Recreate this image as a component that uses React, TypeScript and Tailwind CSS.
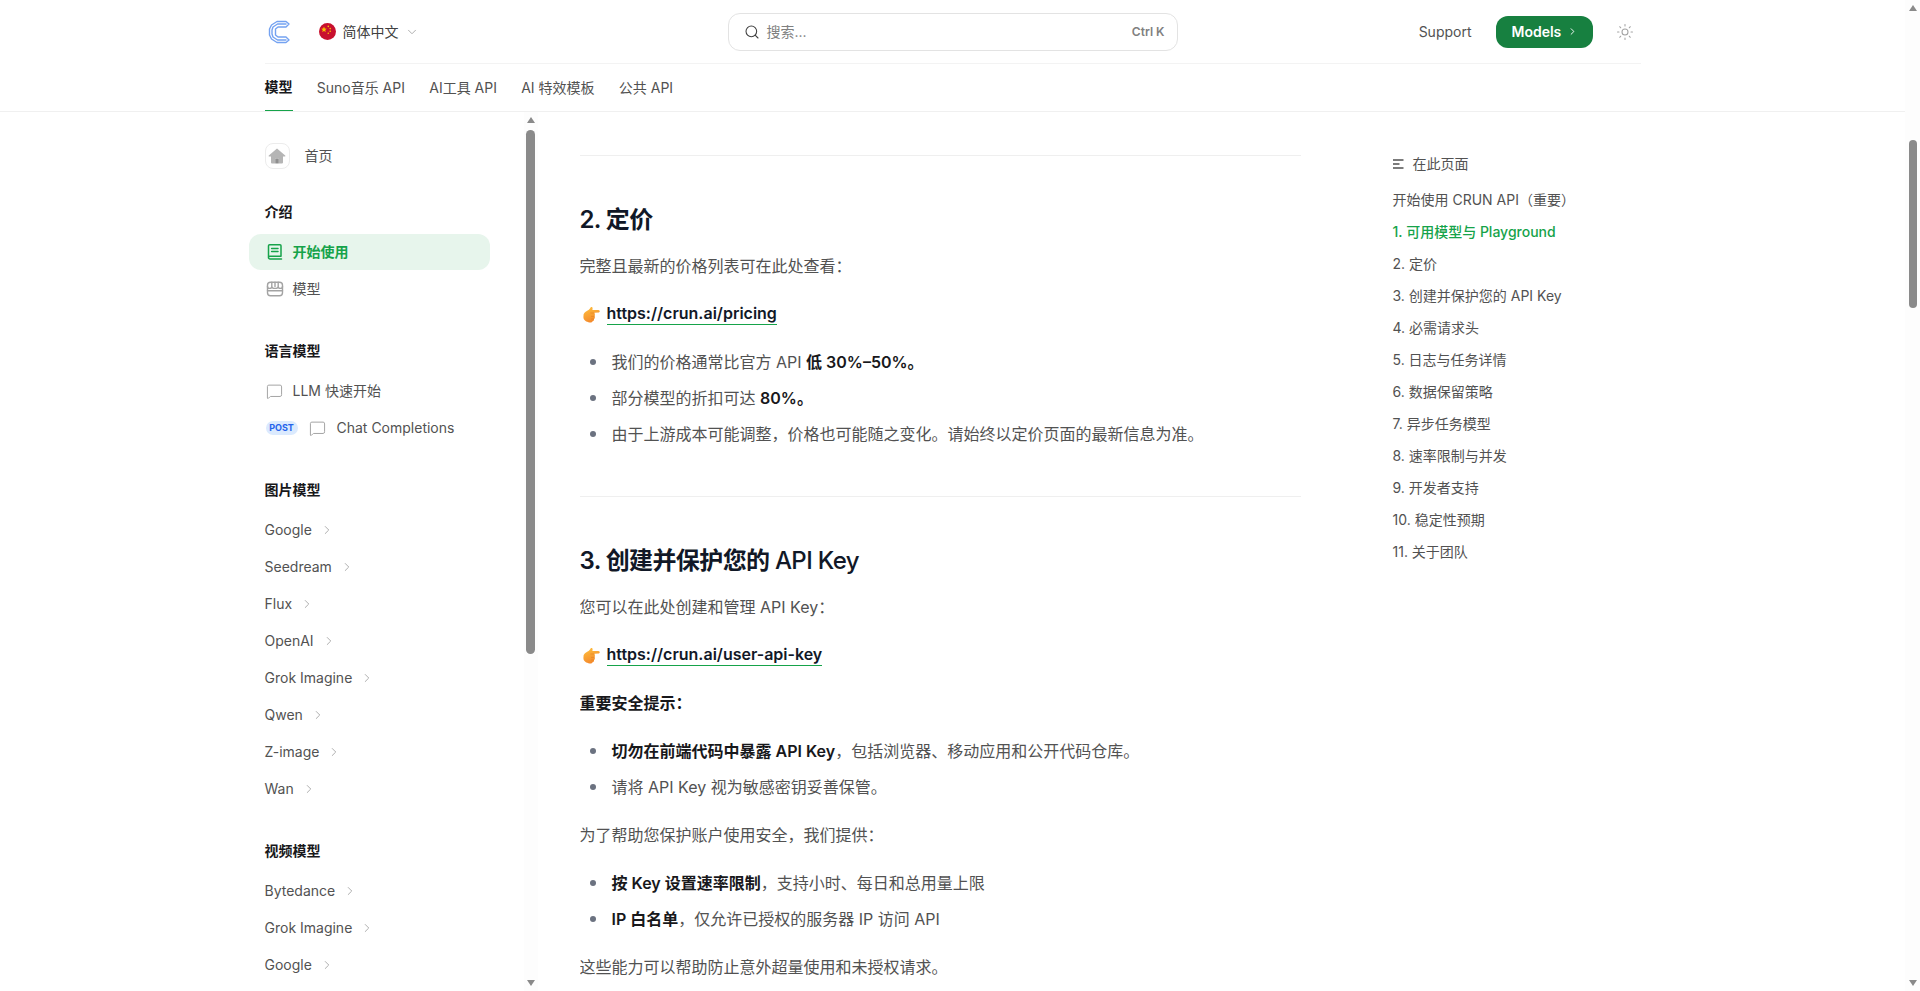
import { Search, ChevronDown, ChevronRight, Sun, MessageSquare } from "lucide-react";

const FONT = "font-['Inter','Noto_Sans_CJK_SC',sans-serif]";

function Logo() {
  return (
    <svg width="24" height="24" viewBox="0 0 24 24" fill="none" stroke="#74a2f1" strokeWidth="1.4" strokeLinejoin="round">
      <path d="M21 4 L18 1.5 H9 L3.5 5 L1.5 9 V15 L3.5 19 L9 22.5 H18 L21 20 L18 17 H10 L7.5 15 V9 L10 7 H18 Z" />
      <path d="M18.5 4 H9.5 L5 7 L4 10 V14 L5 17 L9.5 20 H18.5" />
    </svg>
  );
}

function Flag() {
  return (
    <svg width="17" height="17" viewBox="0 0 17 17">
      <circle cx="8.5" cy="8.5" r="8.5" fill="#c8102e" />
      <polygon points="5,3.6 5.8,5.6 7.8,5.7 6.2,7 6.8,9 5,7.9 3.2,9 3.8,7 2.2,5.7 4.2,5.6" fill="#f8c400" />
      <circle cx="9.3" cy="3.4" r="0.8" fill="#f8c400" />
      <circle cx="11.2" cy="5.6" r="0.8" fill="#f8c400" />
      <circle cx="11.2" cy="8.2" r="0.8" fill="#f8c400" />
      <circle cx="9.3" cy="10.2" r="0.8" fill="#f8c400" />
    </svg>
  );
}

function Hand() {
  return (
    <svg width="17" height="17" viewBox="0 0 17 17" className="shrink-0">
      <defs>
        <linearGradient id="handfill" x1="0" y1="0" x2="0.4" y2="1">
          <stop offset="0" stopColor="#ffc23e" />
          <stop offset="1" stopColor="#f48a2c" />
        </linearGradient>
      </defs>
      <path d="M0.6 8.2 C1.4 6.6 3 5.4 4.6 4.6 C6 3.9 6.8 2.6 7.6 1.4 C8.4 0.6 9.6 1.2 9.6 2.4 L9.4 4 L15.4 4 C17.2 4.1 17.2 6.5 15.4 6.6 L11.4 6.8 C12 8 12 9.4 11.6 10.4 C12.2 11.4 11.8 12.6 11 13 C11.2 14 10.6 15 9.6 15.2 C9.2 16.2 8 16.6 6.6 16.4 C3.4 16 0.4 14.4 0.4 11 Z" fill="url(#handfill)" />
      <path d="M7.4 7 H11.2 M8 10.4 H11.5 M8 13 H10.8" stroke="#e07f22" strokeWidth="0.6" fill="none" />
    </svg>
  );
}

function BookIcon() {
  return (
    <svg width="18" height="18" viewBox="0 0 18 18" fill="none" stroke="#16a34a" strokeWidth="1.5" strokeLinecap="round" strokeLinejoin="round">
      <path d="M2.5 15 V2.8 C2.5 2.2 3 1.7 3.6 1.7 H14 C14.6 1.7 15 2.2 15 2.8 V13.2 H3.8 C3 13.2 2.5 13.8 2.5 14.6 C2.5 15.4 3 16 3.8 16 H15.5" />
      <path d="M5.6 5.4 H12 M5.6 8.6 H12" />
    </svg>
  );
}

function StoreIcon() {
  return (
    <svg width="18" height="18" viewBox="0 0 18 18" fill="none" stroke="#a3a3a3" strokeWidth="1.4" strokeLinecap="round" strokeLinejoin="round">
      <rect x="1.5" y="2.2" width="15" height="13.6" rx="3" />
      <path d="M1.5 6.4 C1.5 9 5.8 9 5.8 6.4 C5.8 9 12.2 9 12.2 6.4 C12.2 9 16.5 9 16.5 6.4 M5.8 2.2 V6.4 M9 2.2 V6.4 M12.2 2.2 V6.4 M1.5 10.8 H16.5" />
    </svg>
  );
}

function HomeIcon() {
  return (
    <svg width="18" height="18" viewBox="0 0 18 18">
      <path d="M9 1.5 L17.2 8.6 C17.6 9 17.3 9.6 16.8 9.6 H15 V15.6 C15 16.1 14.6 16.5 14.1 16.5 H11 V11.5 H7 V16.5 H3.9 C3.4 16.5 3 16.1 3 15.6 V9.6 H1.2 C0.7 9.6 0.4 9 0.8 8.6 Z" fill="#b5b5b5" />
      <rect x="7.2" y="11.5" width="3.6" height="5" fill="#8f8f8f" />
    </svg>
  );
}

function Label({ children }: { children: React.ReactNode }) {
  return <div className="h-5 mb-3 text-sm leading-5 font-semibold text-[#18181b]">{children}</div>;
}

function Item({ text }: { text: string }) {
  return (
    <div className="h-9 mb-px flex items-center gap-2 text-sm text-[#525252]">
      <span>{text}</span>
      <ChevronRight size={14} strokeWidth={1.5} className="text-[#a3a3a3]" />
    </div>
  );
}

function Group({ title, items, gap }: { title: string; items: string[]; gap: string }) {
  return (
    <div className={gap}>
      <Label>{title}</Label>
      {items.map((t, i) => (
        <Item key={i} text={t} />
      ))}
    </div>
  );
}

function Sidebar() {
  return (
    <aside className="w-[289px] -ml-[16px] shrink-0 flex overflow-hidden h-full">
      <div className="w-[275px] pl-[16px] pt-[26px] overflow-hidden">
        <div className="w-[211px]">
          <div className="h-9 flex items-center gap-[15px] text-sm text-[#525252] mb-[28px]">
            <span className="w-[25px] h-[26px] rounded-lg border border-[#ececec] flex items-center justify-center">
              <HomeIcon />
            </span>
            <span>首页</span>
          </div>
          <Label>介绍</Label>
          <div className="h-9 mb-px -ml-[16px] pl-[17px] w-[241px] rounded-xl bg-[#e7f5ec] flex items-center gap-[9px] text-sm font-semibold text-[#16a34a]">
            <BookIcon />
            <span>开始使用</span>
          </div>
          <div className="h-9 mb-[34px] pl-[1px] flex items-center gap-[9px] text-sm text-[#525252]">
            <StoreIcon />
            <span>模型</span>
          </div>
          <Label>语言模型</Label>
          <div className="h-9 mb-px pl-[1px] flex items-center gap-[10px] text-sm text-[#525252]">
            <MessageSquare size={17} strokeWidth={1.4} className="text-[#a3a3a3]" />
            <span>LLM 快速开始</span>
          </div>
          <div className="h-9 mb-[34px] pl-[1px] flex items-center text-sm text-[#525252]">
            <span className="w-8 h-[14px] rounded-full bg-[#dbeafe] text-[#2563eb] text-[9px] leading-[14px] font-bold text-center mr-[11px]">POST</span>
            <MessageSquare size={17} strokeWidth={1.4} className="text-[#a3a3a3] mr-[11px]" />
            <span>Chat Completions</span>
          </div>
          <Group gap="mb-[34px]" title="图片模型" items={["Google", "Seedream", "Flux", "OpenAI", "Grok Imagine", "Qwen", "Z-image", "Wan"]} />
          <Group gap="" title="视频模型" items={["Bytedance", "Grok Imagine", "Google"]} />
        </div>
      </div>
      <Scrollbar className="w-[14px]" thumbTop="mt-[7px]" thumbH="h-[524px]" thumbW="w-[9px]" />
    </aside>
  );
}

function Scrollbar({ className, thumbTop, thumbH, thumbW }: { className: string; thumbTop: string; thumbH: string; thumbW: string }) {
  return (
    <div className={`${className} shrink-0 h-full bg-[#fdfdfd] flex flex-col items-center pt-[5px] pb-[5px]`}>
      <span className="w-0 h-0 border-x-[4px] border-x-transparent border-b-[6px] border-b-[#8a8a8a] shrink-0" />
      <span className={`${thumbTop} ${thumbH} ${thumbW} rounded-full bg-[#8a8a8a] shrink-0`} />
      <span className="flex-1" />
      <span className="w-0 h-0 border-x-[4px] border-x-transparent border-t-[6px] border-t-[#8a8a8a] shrink-0" />
    </div>
  );
}

function P({ children }: { children: React.ReactNode }) {
  return <p className="text-base leading-7 text-[#525252] mb-5">{children}</p>;
}

function LinkP({ href }: { href: string }) {
  return (
    <p className="h-7 text-base leading-7 mb-5 flex items-center">
      <span className="w-[27px] pl-[3px]">
        <Hand />
      </span>
      <a className="font-semibold text-[#111827] border-b-[1.5px] border-[#16a34a] leading-[21px]">{href}</a>
    </p>
  );
}

function Li({ children }: { children: React.ReactNode }) {
  return (
    <li className="flex text-base leading-7 text-[#525252] mb-2">
      <span className="w-[32px] shrink-0 flex items-center pl-[10px]">
        <span className="w-[6px] h-[6px] rounded-full bg-[#6b7280]" />
      </span>
      <span>{children}</span>
    </li>
  );
}

function B({ children }: { children: React.ReactNode }) {
  return <strong className="font-semibold text-[#18181b]">{children}</strong>;
}

function H2({ children }: { children: React.ReactNode }) {
  return <h2 className="text-2xl leading-8 tracking-tight font-semibold text-[#111827] mb-4">{children}</h2>;
}

function Hr() {
  return <hr className="border-0 h-px bg-[#efefef] my-12" />;
}

function Content() {
  return (
    <main className="w-[721px] ml-[42px] shrink-0 overflow-hidden h-full">
      <div className="h-[43px]" />
      <hr className="border-0 h-px bg-[#efefef] mb-12" />
      <H2>2. 定价</H2>
      <P>完整且最新的价格列表可在此处查看：</P>
      <LinkP href="https://crun.ai/pricing" />
      <ul className="mb-5">
        <Li>我们的价格通常比官方 API <B>低 30%–50%。</B></Li>
        <Li>部分模型的折扣可达 <B>80%。</B></Li>
        <Li>由于上游成本可能调整，价格也可能随之变化。请始终以定价页面的最新信息为准。</Li>
      </ul>
      <Hr />
      <H2>3. 创建并保护您的 <span className="font-medium">API Key</span></H2>
      <P>您可以在此处创建和管理 API Key：</P>
      <LinkP href="https://crun.ai/user-api-key" />
      <p className="text-base leading-7 mb-5"><B>重要安全提示：</B></p>
      <ul className="mb-5">
        <Li><B>切勿在前端代码中暴露 API Key</B>，包括浏览器、移动应用和公开代码仓库。</Li>
        <Li>请将 API Key 视为敏感密钥妥善保管。</Li>
      </ul>
      <P>为了帮助您保护账户使用安全，我们提供：</P>
      <ul className="mb-5">
        <Li><B>按 Key 设置速率限制</B>，支持小时、每日和总用量上限</Li>
        <Li><B>IP 白名单</B>，仅允许已授权的服务器 IP 访问 API</Li>
      </ul>
      <P>这些能力可以帮助防止意外超量使用和未授权请求。</P>
    </main>
  );
}

const TOC = [
  "开始使用 CRUN API（重要）",
  "1. 可用模型与 Playground",
  "2. 定价",
  "3. 创建并保护您的 API Key",
  "4. 必需请求头",
  "5. 日志与任务详情",
  "6. 数据保留策略",
  "7. 异步任务模型",
  "8. 速率限制与并发",
  "9. 开发者支持",
  "10. 稳定性预期",
  "11. 关于团队",
];

function Toc() {
  return (
    <div className="ml-[92px] pt-[42px] w-[248px] shrink-0">
      <div className="flex items-center h-5 gap-[9px] text-sm text-[#525252] mb-[10px]">
        <svg width="11" height="10" viewBox="0 0 11 10" fill="none" stroke="#525252" strokeWidth="1.4">
          <path d="M0 1 H10.5 M0 5 H6.5 M0 9 H10.5" />
        </svg>
        <span>在此页面</span>
      </div>
      {TOC.map((t, i) => (
        <div key={i} className={`h-8 flex items-center text-sm ${i === 1 ? "text-[#16a34a] font-medium" : "text-[#525252]"}`}>
          {t}
        </div>
      ))}
    </div>
  );
}

export default function App() {
  return (
    <div className={`${FONT} h-screen overflow-hidden flex bg-white`}>
      <div className="flex-1 min-w-0 flex flex-col h-full">
        <header className="shrink-0 border-b border-[#f0f0f0]">
          <div className="max-w-[1440px] mx-auto px-8">
            <div className="h-16 flex items-center border-b border-[#f3f3f3]">
              <div className="flex-1 flex items-center">
                <span className="ml-[3px] mr-[27px]"><Logo /></span>
                <Flag />
                <span className="ml-[7px] text-sm text-[#404040]">简体中文</span>
                <ChevronDown size={14} strokeWidth={1.5} className="ml-[6px] text-[#a3a3a3]" />
              </div>
              <div className="w-[450px] h-[38px] rounded-xl border border-[#e3e3e3] flex items-center pl-[15px] pr-[12px] text-sm text-[#808080]">
                <Search size={16} strokeWidth={1.6} className="text-[#404040] mr-[7px]" />
                <span className="flex-1">搜索...</span>
                <span className="text-xs font-semibold text-[#808080]">Ctrl K</span>
              </div>
              <div className="flex-1 flex items-center justify-end">
                <span className="text-sm text-[#525252] mr-6">Support</span>
                <span className="w-[97px] h-8 rounded-xl bg-[#178040] text-white text-sm font-semibold flex items-center pl-[16px] gap-[6px]">
                  Models
                  <ChevronRight size={11} strokeWidth={2} />
                </span>
                <Sun size={18} strokeWidth={1.4} className="ml-[23px] mr-[7px] text-[#a3a3a3]" />
              </div>
            </div>
            <nav className="h-[47px] flex items-center gap-[24.25px] text-sm text-[#525252]">
              <span className="h-[47px] flex items-center font-semibold text-[#18181b] border-b border-[#16a34a]">模型</span>
              <span>Suno音乐 API</span>
              <span>AI工具 API</span>
              <span>AI 特效模板</span>
              <span>公共 API</span>
            </nav>
          </div>
        </header>
        <div className="flex-1 min-h-0 max-w-[1440px] w-full mx-auto px-8 flex">
          <Sidebar />
          <Content />
          <Toc />
        </div>
      </div>
      <Scrollbar className="w-[15px]" thumbTop="mt-[129px]" thumbH="h-[168px]" thumbW="w-[8px]" />
    </div>
  );
}
